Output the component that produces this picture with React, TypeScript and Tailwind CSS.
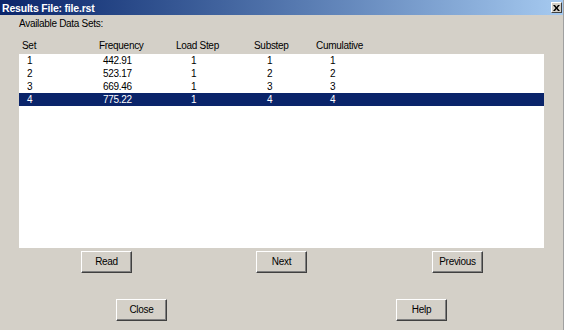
import React from 'react';

const rows = [
  { set: '1', freq: '442.91', load: '1', sub: '1', cum: '1' },
  { set: '2', freq: '523.17', load: '1', sub: '2', cum: '2' },
  { set: '3', freq: '669.46', load: '1', sub: '3', cum: '3' },
  { set: '4', freq: '775.22', load: '1', sub: '4', cum: '4' },
];

const Button: React.FC<{ label: string; className?: string }> = ({ label, className = '' }) => (
  <button
    className={`w-[51px] h-[22px] bg-[#d4d0c8] border border-t-white border-l-white border-r-[#404040] border-b-[#404040] shadow-[inset_-1px_-1px_0_#808080] text-black ${className}`}
  >
    {label}
  </button>
);

const App: React.FC = () => {
  const selected = 3;

  return (
    <div
      className="w-[564px] h-[330px] bg-[#d4d0c8] text-black text-[10px] tracking-[-0.3px] leading-[12px] flex flex-col overflow-hidden border-r border-[#a0a0a0]"
      style={{ fontFamily: '"Liberation Sans", Arial, sans-serif' }}
    >
      {/* title bar */}
      <div className="h-[15px] shrink-0 flex items-center bg-gradient-to-r from-[#0a246a] to-[#a6caf0] pl-[2px] pr-[1px]">
        <span className="text-white font-bold text-[10.5px] tracking-[-0.2px]">Results File: file.rst</span>
        <div className="ml-auto w-[11px] h-[11px] bg-[#d4d0c8] border border-t-white border-l-white border-r-[#404040] border-b-[#404040] flex items-center justify-center">
          <svg width="7" height="6" viewBox="0 0 7 6">
            <path d="M0 0h2l1.5 2L5 0h2L4.5 3 7 6H5L3.5 4 2 6H0l2.5-3z" fill="#000" />
          </svg>
        </div>
      </div>

      <div className="pl-[19px] mt-[3px] h-[12px]">Available Data Sets:</div>

      {/* header */}
      <div className="mt-[10px] mx-[19px] grid grid-cols-[77px_77px_78px_62px_1fr] h-[12px]">
        <span className="pl-[3px]">Set</span>
        <span className="pl-[3px]">Frequency</span>
        <span className="pl-[3px]">Load Step</span>
        <span className="pl-[3px]">Substep</span>
        <span className="pl-[3px]">Cumulative</span>
      </div>

      {/* list */}
      <div className="mt-[2px] mx-[19px] h-[194px] bg-white">
        {rows.map((r, i) => (
          <div
            key={r.set}
            className={`grid grid-cols-[77px_77px_78px_62px_1fr] h-[13px] items-center ${i === selected ? 'bg-[#0a246a] text-white' : ''}`}
          >
            <span className="pl-[8px]">{r.set}</span>
            <span className="pl-[7px]">{r.freq}</span>
            <span className="pl-[18px]">{r.load}</span>
            <span className="pl-[16px]">{r.sub}</span>
            <span className="pl-[17px]">{r.cum}</span>
          </div>
        ))}
      </div>

      <div className="mt-[3px] flex">
        <Button label="Read" className="ml-[81px]" />
        <Button label="Next" className="ml-[124px]" />
        <Button label="Previous" className="ml-[125px]" />
      </div>

      <div className="mt-[26px] flex">
        <Button label="Close" className="ml-[116px]" />
        <Button label="Help" className="ml-[229px]" />
      </div>
    </div>
  );
};

export default App;
